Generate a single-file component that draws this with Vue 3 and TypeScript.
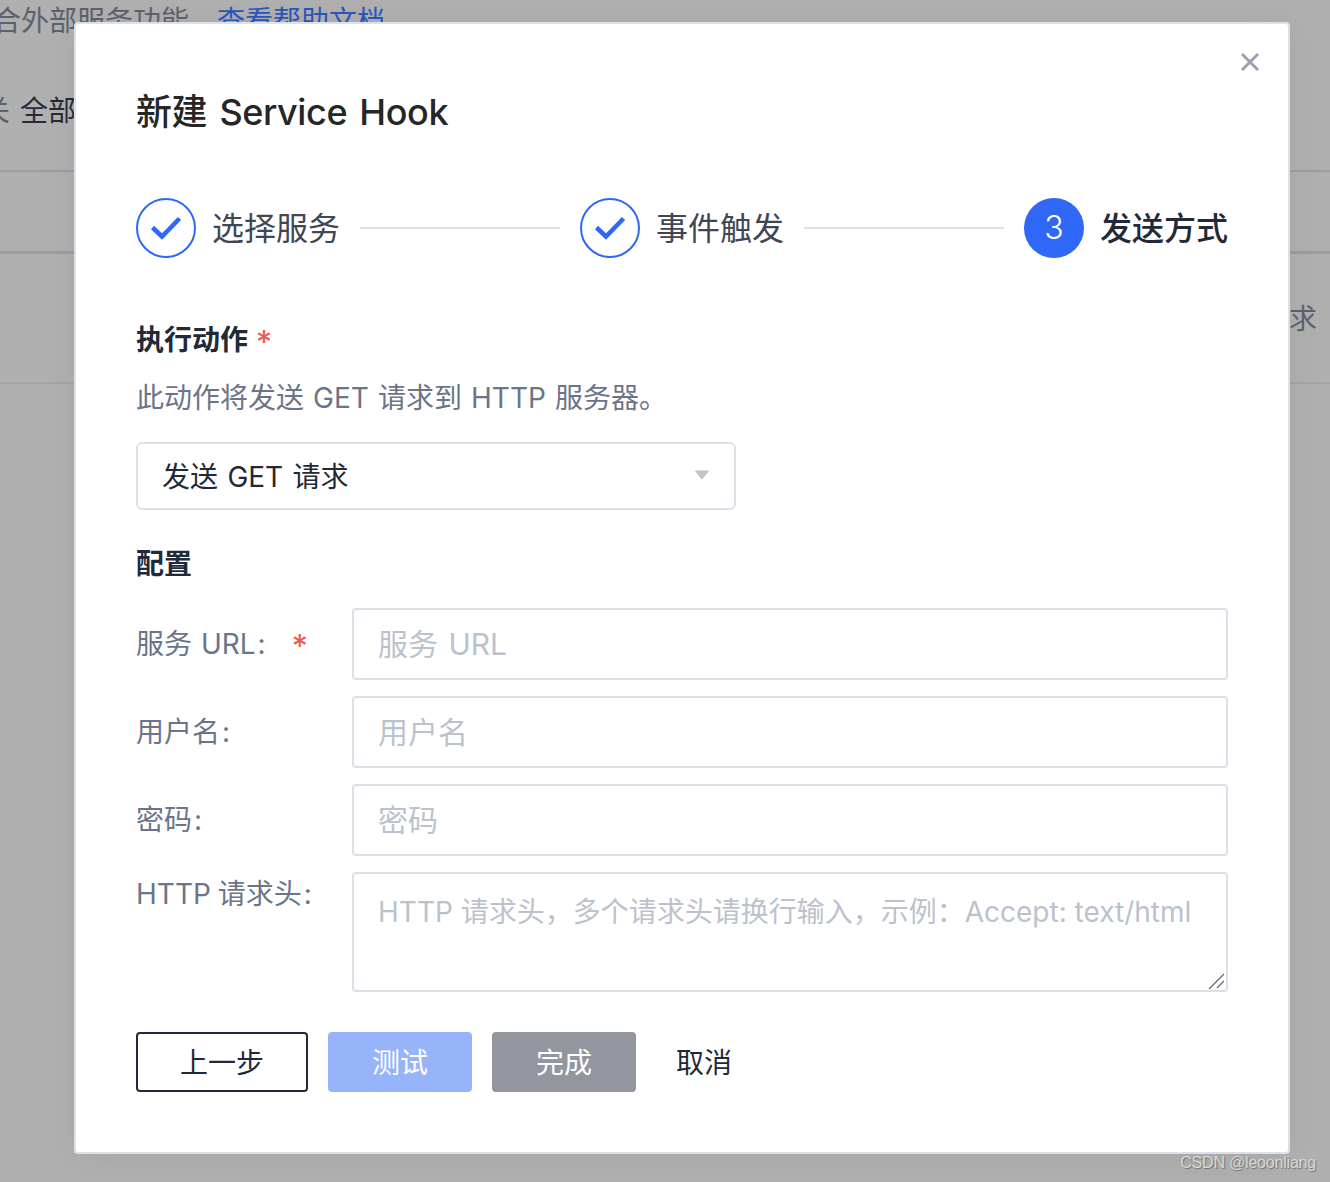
<template>
  <div class="page">
    <div class="bg-intro">
      <span class="bg-muted">合外部服务功能</span>
      <span class="bg-link">查看帮助文档</span>
    </div>
    <div class="bg-filter">
      <span class="bg-muted">关</span>
      <span class="bg-dark">全部</span>
    </div>
    <div class="bg-head"></div>
    <div class="bg-row"><span class="bg-muted">求</span></div>

    <section class="modal">
      <button class="close" type="button" aria-label="关闭">
        <svg width="20" height="20" viewBox="0 0 20 20">
          <path d="M2 2 L18 18 M18 2 L2 18" stroke="#99a1ae" stroke-width="3" fill="none" />
        </svg>
      </button>

      <h1 class="title">新建 Service Hook</h1>

      <div class="steps">
        <template v-for="(step, i) in steps" :key="step.label">
          <div v-if="i > 0" class="step-line"></div>
          <div class="step" :class="{ current: step.current }">
            <span v-if="step.current" class="step-num">3</span>
            <svg v-else class="step-done" width="60" height="60" viewBox="0 0 60 60">
              <circle cx="30" cy="30" r="29" fill="none" stroke="#2f68f6" stroke-width="2" />
              <path d="M16.5 29.5 L26 38.5 L43.5 20.5" fill="none" stroke="#2f68f6" stroke-width="4.5" />
            </svg>
            <span class="step-label">{{ step.label }}</span>
          </div>
        </template>
      </div>

      <div class="section-title action-title">执行动作<span class="star">*</span></div>
      <p class="desc">此动作将发送 GET 请求到 HTTP 服务器。</p>

      <div class="select">
        <span>发送 GET 请求</span>
        <svg width="16" height="10" viewBox="0 0 16 10">
          <path d="M1.5 1 H14.5 L8 9 Z" fill="#bfc3cb" stroke="#bfc3cb" stroke-linejoin="round" />
        </svg>
      </div>

      <div class="section-title config-title">配置</div>

      <div class="form">
        <div v-for="field in fields" :key="field.label" class="field">
          <label class="field-label">{{ field.label }}<span class="colon">:</span><span v-if="field.required" class="star field-star">*</span></label>
          <input class="control" type="text" :placeholder="field.placeholder" />
        </div>
        <div class="field field-top">
          <label class="field-label">HTTP 请求头<span class="colon">:</span></label>
          <div class="area-wrap">
            <textarea class="control area" placeholder="HTTP 请求头，多个请求头请换行输入，示例：Accept: text/html"></textarea>
            <svg class="grip" width="18" height="18" viewBox="0 0 18 18">
              <path d="M1 17 L16 2 M9 16 L16 9" stroke="#666" stroke-width="1.2" fill="none" />
            </svg>
          </div>
        </div>
      </div>

      <div class="actions">
        <button class="btn btn-outline" type="button">上一步</button>
        <button class="btn btn-test" type="button">测试</button>
        <button class="btn btn-done" type="button">完成</button>
        <button class="btn btn-text" type="button">取消</button>
      </div>
    </section>

    <div class="watermark">CSDN @leoonliang</div>
  </div>
</template>

<script setup lang="ts">
interface Step {
  label: string
  current?: boolean
}

interface Field {
  label: string
  placeholder: string
  required?: boolean
}

const steps: Step[] = [
  { label: '选择服务' },
  { label: '事件触发' },
  { label: '发送方式', current: true }
]

const fields: Field[] = [
  { label: '服务 URL', placeholder: '服务 URL', required: true },
  { label: '用户名', placeholder: '用户名' },
  { label: '密码', placeholder: '密码' }
]
</script>

<style>
html,
body {
  margin: 0;
  background: #b0b0b0;
}
</style>

<style scoped>
.page {
  position: relative;
  width: 1330px;
  height: 1182px;
  overflow: hidden;
  background: #b0b0b0;
  font-family: Inter, 'Noto Sans CJK SC', sans-serif;
  font-size: 28px;
  color: #222938;
}

.bg-intro {
  display: flex;
  gap: 28px;
  height: 41px;
  margin-left: -7px;
  line-height: 42px;
}

.bg-filter {
  display: flex;
  gap: 10px;
  height: 131px;
  padding-top: 30px;
  margin-left: -18px;
  box-sizing: border-box;
  line-height: 80px;
  border-bottom: 2px solid #9b9da4;
}

.bg-head {
  height: 79px;
  border-bottom: 3px solid #9b9da4;
}

.bg-row {
  display: flex;
  justify-content: flex-end;
  box-sizing: border-box;
  height: 130px;
  padding: 45px 13px 0 0;
  border-bottom: 2px solid #a5a5a8;
  line-height: 40px;
}

.bg-muted {
  color: #5c626d;
}

.bg-link {
  color: #2a56bd;
}

.bg-dark {
  color: #262b36;
}

.modal {
  position: absolute;
  top: 22px;
  left: 74px;
  box-sizing: border-box;
  width: 1216px;
  height: 1132px;
  padding: 0 60px;
  background: #fff;
  border: 2px solid #dce0e8;
  border-radius: 4px;
  box-shadow: 0 4px 40px rgba(0, 0, 0, 0.06);
}

.close {
  position: absolute;
  top: 28px;
  right: 28px;
  display: flex;
  padding: 0;
  background: none;
  border: 0;
}

.title {
  margin: 0;
  padding-top: 62px;
  font-size: 36px;
  font-weight: 500;
  line-height: 52px;
  letter-spacing: -0.4px;
  word-spacing: 3px;
  color: #262626;
}

.steps {
  display: flex;
  align-items: center;
  gap: 20px;
  margin-top: 60px;
}

.step {
  display: flex;
  align-items: center;
  gap: 16px;
  font-size: 32px;
  line-height: 60px;
  color: #3f4654;
}

.step.current {
  font-weight: 500;
  color: #222938;
}

.step-done {
  display: block;
}

.step-label {
  padding-top: 2px;
  line-height: 58px;
}

.step-num {
  width: 60px;
  height: 60px;
  font-size: 32px;
  font-weight: 300;
  line-height: 60px;
  text-align: center;
  color: #fff;
  background: #2f68f6;
  border-radius: 50%;
}

.step-line {
  width: 200px;
  height: 2px;
  background: #dce0e8;
}

.section-title {
  font-size: 28px;
  font-weight: 700;
  line-height: 40px;
  color: #222938;
}

.action-title {
  margin-top: 62px;
}

.star {
  margin-left: 8px;
  font-size: 32px;
  font-weight: 400;
  line-height: 0;
  vertical-align: -4px;
  color: #f0564a;
}

.desc {
  margin: 18px 0 0;
  line-height: 40px;
  word-spacing: 1.2px;
  color: #6b7488;
}

.select {
  display: flex;
  align-items: center;
  justify-content: space-between;
  box-sizing: border-box;
  width: 600px;
  height: 68px;
  margin-top: 24px;
  padding: 0 24px 2px 24px;
  word-spacing: 1.5px;
  background: #fff;
  border: 2px solid #dce0e8;
  border-radius: 6px;
}

.config-title {
  margin-top: 34px;
}

.form {
  display: flex;
  flex-direction: column;
  gap: 16px;
  margin-top: 24px;
}

.field {
  display: flex;
  align-items: center;
}

.field-top {
  align-items: flex-start;
}

.field-label {
  flex: 0 0 216px;
  line-height: 40px;
  word-spacing: 1px;
  color: #6b7488;
}

.colon {
  margin-left: 2px;
}

.field-star {
  margin-left: 26px;
}

.field-top .field-label {
  margin-top: 2px;
  word-spacing: -1px;
}

.control {
  flex: 1;
  box-sizing: border-box;
  height: 72px;
  min-width: 0;
  padding: 0 24px;
  font-family: inherit;
  font-size: 30px;
  word-spacing: 2px;
  color: #222938;
  background: #fff;
  border: 2px solid #dce0e8;
  border-radius: 4px;
  outline: none;
}

.control::placeholder {
  color: #bcc2cc;
  opacity: 1;
}

.area-wrap {
  position: relative;
  flex: 1;
  min-width: 0;
}

.area {
  display: block;
  width: 100%;
  height: 120px;
  padding-top: 18px;
  font-size: 28px;
  line-height: 40px;
  word-spacing: 0;
  resize: none;
}

.grip {
  position: absolute;
  right: 2px;
  bottom: 2px;
}

.actions {
  display: flex;
  gap: 20px;
  margin-top: 40px;
}

.btn {
  box-sizing: border-box;
  width: 144px;
  height: 60px;
  padding: 0 0 2px;
  font-family: inherit;
  font-size: 28px;
  color: #fff;
  border: 0;
  border-radius: 4px;
}

.btn-outline {
  width: 172px;
  color: #222938;
  background: #fff;
  border: 2px solid #222938;
}

.btn-test {
  background: #97b4fb;
}

.btn-done {
  background: #93969e;
}

.btn-text {
  width: 96px;
  color: #222938;
  background: none;
}

.watermark {
  position: absolute;
  right: 14px;
  bottom: 9px;
  font-family: 'Liberation Sans', sans-serif;
  font-size: 16px;
  line-height: 20px;
  letter-spacing: -0.2px;
  color: #d8d8d8;
  text-shadow: 1px 1px 1px rgba(0, 0, 0, 0.35);
}
</style>
